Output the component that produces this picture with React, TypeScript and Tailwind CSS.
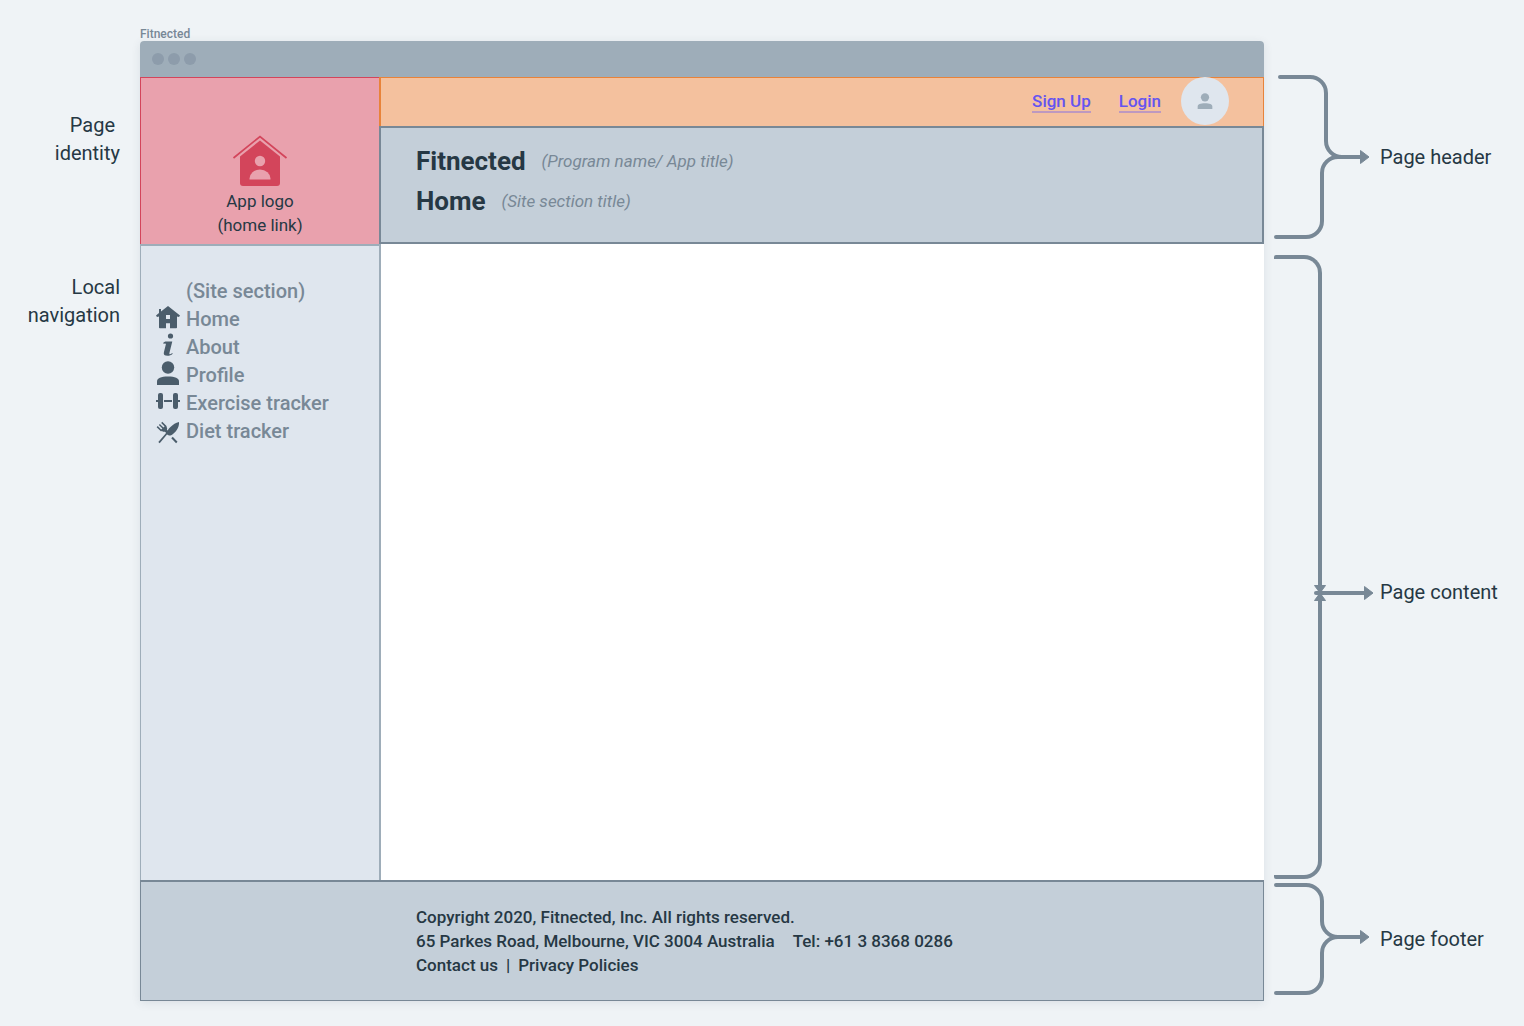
import type { ReactNode } from "react";

const LINE = "#788896";

function HouseLogo() {
  return (
    <svg width="56" height="52" viewBox="0 0 56 52" aria-hidden="true" className="text-[#d3455b]">
      <path d="M1.5 23 28 1.5 54.5 23" fill="none" stroke="currentColor" strokeWidth="1.7" />
      <path
        d="M28 5.5 48 21.5V48a3 3 0 0 1-3 3H11a3 3 0 0 1-3-3V21.5Z"
        fill="currentColor"
      />
      <circle cx="28" cy="26" r="5.2" fill="#e9a1ad" />
      <path d="M17.500 44.500v-1a10.500 9 0 0 1 21 0v1Z" fill="#e9a1ad" />
    </svg>
  );
}

function PersonIcon({ size }: { size: number }) {
  return (
    <svg width={size} height={size} viewBox="0 0 24 24" fill="currentColor" aria-hidden="true">
      <circle cx="12" cy="6.500" r="6.200" />
      <path d="M1 24v-3.500C1 17 5 15.500 12 15.500S23 17 23 20.500V24Z" />
    </svg>
  );
}

function HomeIcon() {
  return (
    <svg width="24" height="24" viewBox="0 -1 24 24" fill="currentColor" aria-hidden="true">
      <path
        fillRule="evenodd"
        d="M12 0 24 9.500 23 11l-2-.5V21.500a.8.8 0 0 1-.8.8h-6.200v-5h-4v5H3.800a.8.8 0 0 1-.8-.8V10.500L1 11 0 9.500l3-2.400V3h2v2.500ZM10 9v4h4V9Z"
      />
    </svg>
  );
}

function InfoIcon() {
  return (
    <svg width="24" height="24" viewBox="0 -1 24 24" fill="currentColor" aria-hidden="true">
      <circle cx="14.500" cy="2" r="2.600" />
      <path d="M7 9.500c.6-1.600 1.900-2 3.500-2H16.300L13.400 19c-.2.900.1 1.300.8 1.200.8-.1 1.200-.6 2-1.100l.5.7c-1.500 1.400-3.300 2-5.200 2-3 0-4.200-1.300-3.600-3.600L10 9.800Z" />
    </svg>
  );
}

function DumbbellIcon() {
  return (
    <svg width="24" height="24" viewBox="0 0 24 24" fill="currentColor" aria-hidden="true">
      <rect x="2" y="4" width="5" height="16" rx="2" />
      <rect x="17" y="4" width="5" height="16" rx="2" />
      <path d="M0 11h3v2H0zM8 11h8v2H8zM21 11h3v2h-3z" />
    </svg>
  );
}

function CutleryIcon() {
  return (
    <svg
      width="24"
      height="28"
      viewBox="0 -2 24 28"
      fill="none"
      stroke="currentColor"
      aria-hidden="true"
    >
      <path
        d="M23 3C23.400 7.500 21 11.800 17 15c-1.800 1.400-3.300 1.800-4.500 1.300L11 15.500 3.700 24.300 2.300 23 9.500 14.800C12 10 16.500 4.500 23 3Z"
        fill="currentColor"
        stroke="none"
      />
      <path d="M16 18.500 20.800 23.500" strokeWidth="2" />
      <path d="M1.200 7.600 5.600 12M3.400 5.500 8.400 10.500M5.700 3.400 10.200 7.900" strokeWidth="1.500" />
      <path
        d="M4.700 11 9.300 6.700C11.200 8.200 11.500 9.500 10.900 10.700L12.500 12.400 10.600 14.300 8.900 12.700C7.500 13.200 6 12.500 4.700 11Z"
        fill="currentColor"
        stroke="none"
      />
    </svg>
  );
}

const NAV: { label: string; icon: ReactNode }[] = [
  { label: "Home", icon: <HomeIcon /> },
  { label: "About", icon: <InfoIcon /> },
  { label: "Profile", icon: <PersonIcon size={24} /> },
  { label: "Exercise tracker", icon: <DumbbellIcon /> },
  { label: "Diet tracker", icon: <CutleryIcon /> },
];

function HeaderBracket() {
  return (
    <svg width="116" height="164" viewBox="0 0 116 164" aria-hidden="true">
      <g fill="none" stroke={LINE} strokeWidth="4" strokeLinecap="round">
        <path d="M16 2H46A16 16 0 0 1 62 18V66A16 16 0 0 0 78 82H98" />
        <path d="M12 162H42A16 16 0 0 0 58 146V98A16 16 0 0 1 74 82H98" />
      </g>
      <path d="M96.500 75.500 105 82 96.500 88.500Z" fill={LINE} stroke={LINE} strokeLinejoin="round" />
    </svg>
  );
}

function FooterBracket() {
  return (
    <svg width="116" height="112" viewBox="0 0 116 112" aria-hidden="true">
      <g fill="none" stroke={LINE} strokeWidth="4" strokeLinecap="round">
        <path d="M12 2H42A16 16 0 0 1 58 18V38A16 16 0 0 0 74 54H98" />
        <path d="M12 110H42A16 16 0 0 0 58 94V70A16 16 0 0 1 74 54H98" />
      </g>
      <path d="M96.500 47.500 105 54 96.500 60.500Z" fill={LINE} stroke={LINE} strokeLinejoin="round" />
    </svg>
  );
}

function ContentArrow() {
  return (
    <svg width="116" height="20" viewBox="0 0 116 20" aria-hidden="true">
      <path d="M52 11H102" stroke={LINE} strokeWidth="4" strokeLinecap="round" />
      <path
        d="M50.500 3.500H61.500L56 11ZM50.500 18.500H61.500L56 11ZM100.500 4.500 109 11 100.500 17.500Z"
        fill={LINE}
        stroke={LINE}
        strokeLinejoin="round"
      />
    </svg>
  );
}

export default function App() {
  return (
    <div className="grid min-h-screen grid-cols-[140px_minmax(0,1fr)_260px] bg-[#eff3f6] font-['Roboto',sans-serif] font-medium text-[#263844]">
      <aside className="pt-[111px] pr-5 text-right text-xl leading-7 font-normal">
        <p className="whitespace-pre">{"Page \nidentity"}</p>
        <p className="mt-[106px]">
          Local
          <br />
          navigation
        </p>
      </aside>

      <div className="flex flex-col pt-[26px] pb-[25px]">
        <p className="h-[15px] text-xs leading-4 text-[#788896]">Fitnected</p>
        <div className="flex flex-1 flex-col rounded-t bg-white shadow-[0_2px_10px_rgba(40,60,75,0.1)]">
          <div className="flex h-9 items-center gap-1 rounded-t bg-[#9eadb9] px-3">
            <span className="size-3 rounded-full bg-[#8d9cab]" />
            <span className="size-3 rounded-full bg-[#8d9cab]" />
            <span className="size-3 rounded-full bg-[#8d9cab]" />
          </div>

          <header className="flex">
            <a
              href="#"
              className="flex w-[239px] flex-col items-center justify-end border-t border-l border-[#d3455b] bg-[#e9a1ad] pb-[7px] text-center text-[17px] leading-6 font-normal"
            >
              <HouseLogo />
              <span className="pt-0.5">App logo</span>
              <span>(home link)</span>
            </a>
            <div className="flex-1">
              <div className="flex h-[49px] items-start justify-end border-t border-r border-l-2 border-[#e8833a] bg-[#f4c19e] pr-[34px] text-[17px] leading-5 text-[#6554f0]">
                <a href="#" className="mt-[13px] border-b-2 border-[#bd99c0]">Sign Up</a>
                <a href="#" className="mt-[13px] ml-7 border-b-2 border-[#bd99c0]">Login</a>
                <button
                  type="button"
                  aria-label="Account"
                  className="-mt-px ml-5 grid size-12 place-items-center rounded-full bg-[#dfe6ee] text-[#9eadb9]"
                >
                  <PersonIcon size={16} />
                </button>
              </div>
              <div className="flex h-[118px] flex-col border-2 border-[#788896] bg-[#c4cfd9] px-[35px] pt-[13px] leading-10">
                <div className="flex items-center gap-4">
                  <h1 className="text-[26px] font-bold">Fitnected</h1>
                  <span className="text-[17px] font-normal text-[#788896] italic">(Program name/ App title)</span>
                </div>
                <div className="flex items-center gap-4">
                  <h2 className="text-[26px] font-bold">Home</h2>
                  <span className="text-[17px] font-normal text-[#788896] italic">(Site section title)</span>
                </div>
              </div>
            </div>
          </header>

          <div className="flex flex-1">
            <nav
              aria-labelledby="section-title"
              className="w-[241px] border-t-2 border-r-2 border-l border-[#9eadb9] bg-[#dfe6ee] pt-[31px] pl-[15px] text-xl leading-7 text-[#788896]"
            >
              <p id="section-title" className="pl-[30px]">(Site section)</p>
              <ul>
                {NAV.map(({ label, icon }) => (
                  <li key={label}>
                    <a href="#" className="flex gap-1.5">
                      <span className="size-6 text-[#4b5d6b]">{icon}</span>
                      {label}
                    </a>
                  </li>
                ))}
              </ul>
            </nav>
            <main className="flex-1 bg-white" />
          </div>

          <footer className="border border-t-2 border-[#788896] bg-[#c4cfd9] py-[23px] pl-[275px] text-[17px] leading-6">
            <p>Copyright 2020, Fitnected, Inc. All rights reserved.</p>
            <p className="flex gap-[18px]">
              <span>65 Parkes Road, Melbourne, VIC 3004 Australia</span>
              <span>Tel: +61 3 8368 0286</span>
            </p>
            <p className="flex gap-2">
              <a href="#">Contact us</a>
              <span>|</span>
              <a href="#">Privacy Policies</a>
            </p>
          </footer>
        </div>
      </div>

      <aside className="flex flex-col pt-[75px] pb-[31px] text-xl leading-7 font-normal">
        <div className="flex items-center">
          <HeaderBracket />
          <span>Page header</span>
        </div>
        <div className="relative mt-4 mb-1 flex-1">
          <div className="ml-[10px] h-full w-12 rounded-l-xs rounded-r-[18px] border-y-4 border-r-4 border-[#788896]" />
          <div className="absolute inset-x-0 top-[54%] flex -translate-y-1/2 items-center">
            <ContentArrow />
            <span>Page content</span>
          </div>
        </div>
        <div className="flex items-center">
          <FooterBracket />
          <span>Page footer</span>
        </div>
      </aside>
    </div>
  );
}
